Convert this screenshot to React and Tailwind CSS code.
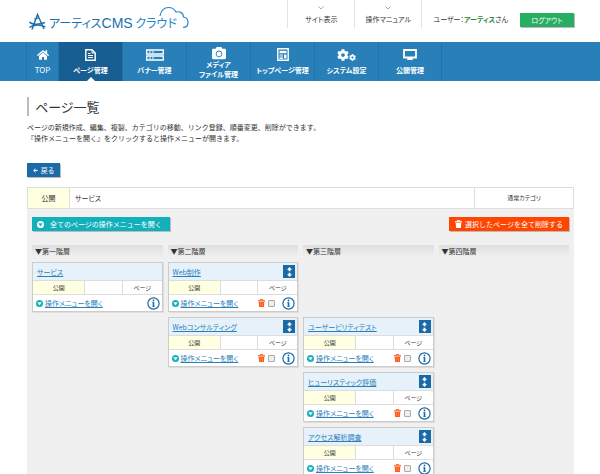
import React from 'react';
import { FaHome, FaCamera, FaCog, FaArrowLeft } from 'react-icons/fa';

const PageIcon = () => (
  <svg width="11" height="12" viewBox="0 0 11 12" fill="none" stroke="currentColor">
    <path d="M.8.8h6.200l3.200 3.200v7.200H.8z" strokeWidth="1.4" />
    <path d="M7 1v3h3M3 4.500h2.500M3 6.500h5M3 8.500h5" strokeWidth="1" />
  </svg>
);

const BannerIcon = () => (
  <svg width="18" height="12" viewBox="0 0 18 12" fill="none" stroke="currentColor">
    <path d="M.7 1h16.600v4H.7zM.7 7h16.600v4H.7z" strokeWidth="1.3" />
    <path d="M3 3h6M3 9h6" strokeWidth="1" strokeDasharray="2 1" />
  </svg>
);

const TopPageIcon = () => (
  <svg width="12" height="13" viewBox="0 0 12 13" fill="none" stroke="currentColor">
    <path d="M.8.8h10.400v11.400H.8z" strokeWidth="1.4" />
    <path d="M2.500 4h7" strokeWidth="2.400" />
    <path d="M2.500 7h3.500M2.500 9h3.500M2.500 10.500h3.500" strokeWidth="1" />
    <path d="M7 6.500h2.500v4H7z" fill="currentColor" stroke="none" />
  </svg>
);

const MonitorIcon = () => (
  <svg width="14" height="11" viewBox="0 0 14 11">
    <path d="M1 1h12v7.500H1z" fill="none" stroke="currentColor" strokeWidth="1.8" />
    <path d="M5 8.500h4l1 2.500H4z" fill="currentColor" />
  </svg>
);

const GearsIcon = () => (
  <span className="flex items-end">
    <FaCog size={12} />
    <FaCog size={7} />
  </span>
);

const InfoIcon = () => (
  <svg width="13" height="13" viewBox="0 0 13 13" fill="none" stroke="currentColor">
    <circle cx="6.500" cy="6.500" r="5.600" strokeWidth="1.200" />
    <path d="M6.500 5.200v4.600" strokeWidth="1.600" />
    <path d="M5.300 5.600h1.200M5.400 9.400h2.200" strokeWidth=".8" />
    <circle cx="6.500" cy="3.500" r=".9" fill="currentColor" stroke="none" />
  </svg>
);

const MoveIcon = () => (
  <svg width="5" height="10" viewBox="0 0 5 10" fill="currentColor">
    <path d="M2.500 0L5 2.700H3.400v1.600H1.600V2.700H0zM2.500 10L0 7.300h1.600V5.700h1.800v1.600H5z" />
  </svg>
);

const TrashIcon = () => (
  <svg width="7" height="8" viewBox="0 0 7 8">
    <path d="M2.200 1.200V.5h2.600v.7" fill="none" stroke="currentColor" strokeWidth=".9" />
    <path d="M0 1.200h7v1.300H0zM.7 3h5.600L5.900 8H1.100z" fill="currentColor" />
    <path d="M2.600 3.700v3.300M4.400 3.700v3.300" stroke="#ffffff" strokeOpacity=".45" strokeWidth=".5" />
  </svg>
);

const OpenIcon = ({ mark = '#ffffff' }) => (
  <svg className="shrink-0" width="7" height="7" viewBox="0 0 7 7">
    <circle cx="3.500" cy="3.500" r="3.500" fill="currentColor" />
    <path d="M1.600 2.400h3.800L3.500 5.200z" fill={mark} stroke={mark} strokeWidth=".3" />
  </svg>
);

const ChevronDown = () => (
  <svg width="6" height="4" viewBox="0 0 6 4" fill="none" stroke="#aaaaaa">
    <path d="M.5.5L3 3 5.500.5" />
  </svg>
);

const Logo = () => (
  <a href="#top" className="relative flex items-end pt-[13px] text-[#1b70b0]">
    <svg width="19" height="18" viewBox="0 0 19 18" fill="none" stroke="currentColor" strokeWidth="1.400">
      <path d="M4 16.500L9.500 1.500 16 16" />
      <path d="M6.500 5.500C8 7 9 4 10.500 5.500" />
      <path d="M1.500 9c2 2.500 9 3 15.500.5M1.500 14.500C5 11.500 12 11 17.500 14" />
    </svg>
    <span className="ml-[2px] whitespace-nowrap text-[12px] leading-[16px]">
      アーティス<span className="font-['Liberation_Sans',sans-serif] text-[14px]">CMS</span>{' '}
      <span className="text-[#2386c8]">クラウド</span>
    </span>
    <svg
      className="absolute top-[6px] left-[131px]"
      width="31"
      height="23"
      viewBox="0 0 31 23"
      fill="none"
      stroke="#2386c8"
      strokeWidth="1.200"
    >
      <path d="M1 10C2 5 5 1.500 9.500 1.500c3.500 0 6 1.500 7.500 4.500 4-1 7.500 1 7.500 5 3 .5 4.500 3 4.500 5.500 0 3-2 5-5 5" />
    </svg>
  </a>
);

const navItems = [
  { label: ['ページ管理'], icon: PageIcon, active: true },
  { label: ['バナー管理'], icon: BannerIcon },
  { label: ['メディア', 'ファイル管理'], icon: FaCamera },
  { label: ['トップページ管理'], icon: TopPageIcon },
  { label: ['システム設定'], icon: GearsIcon },
  { label: ['公開管理'], icon: MonitorIcon },
];

const levels = ['第一階層', '第二階層', '第三階層', '第四階層'];

// one array per row of the tree, null = empty slot
const rows = [
  [{ title: 'サービス', root: true }, { title: 'Web制作' }, null, null],
  [null, { title: 'Webコンサルティング' }, { title: 'ユーザービリティテスト' }, null],
  [null, null, { title: 'ヒューリスティック評価' }, null],
  [null, null, { title: 'アクセス解析調査' }, null],
];

const Header = () => (
  <header className="flex h-[42px] items-start pr-[26px] pl-[28px]">
    <Logo />
    <div className="ml-auto flex text-[7px] leading-[10px]">
      {['サイト表示', '操作マニュアル'].map((label) => (
        <a
          key={label}
          href="#link"
          className="flex h-[28px] w-[67px] flex-col items-center gap-[4px] border-l border-[#e4e4e4] pt-[6px]"
        >
          <ChevronDown />
          {label}
        </a>
      ))}
      <div className="h-[28px] border-l border-[#e4e4e4] pt-[14px] pl-[11px] whitespace-nowrap">
        ユーザー：<b className="text-[#2a8a35]">アーティス</b>さん
      </div>
      <button className="mt-[13px] ml-[12px] h-[14px] w-[54px] bg-[#27ae60] text-white shadow-[1px_1px_0_#bbbbbb]">
        ログアウト
      </button>
    </div>
  </header>
);

const Nav = () => (
  <nav className="flex h-[39px] bg-[#2980b9] pl-[26px] text-[7px] leading-[9px] font-bold text-white">
    <a
      href="#top"
      className="flex w-[32px] flex-col items-center border-l border-[#2273a9] pt-[6px] font-normal"
    >
      <span className="flex h-[13px] items-center">
        <FaHome size={12} />
      </span>
      <span className="mt-[4px] text-[8px]">TOP</span>
    </a>
    {navItems.map(({ label, icon: Icon, active }) => (
      <a
        key={label[0]}
        href="#nav"
        className={`relative flex w-[64px] flex-col items-center border-l border-[#2273a9] whitespace-nowrap last:border-r ${
          active ? 'bg-[#175f93]' : ''
        } ${label.length > 1 ? 'pt-[4px]' : 'pt-[6px]'}`}
      >
        <span className="flex h-[13px] items-center">
          <Icon size={14} />
        </span>
        <span className={`text-center ${label.length > 1 ? '' : 'mt-[4px]'}`}>
          {label.map((line) => (
            <span key={line} className="block leading-[10px]">
              {line}
            </span>
          ))}
        </span>
        {active && (
          <svg className="absolute bottom-0" width="8" height="4" viewBox="0 0 8 4" fill="#ffffff">
            <path d="M0 4l4-4 4 4z" />
          </svg>
        )}
      </a>
    ))}
  </nav>
);

const PageCard = ({ title, root }) => (
  <div className="border border-[#cccccc] bg-white shadow-[1px_1px_0_#dddddd]">
    <div className="flex h-[17px] items-center justify-between bg-[#e6f1fa] pr-[2px] pl-[4px]">
      <a href="#page" className="whitespace-nowrap text-[#2980b9] underline">
        {title}
      </a>
      {!root && (
        <button
          aria-label={`${title}を移動`}
          className="flex h-[13px] w-[12px] items-center justify-center bg-[#1a6aa8] text-white"
        >
          <MoveIcon />
        </button>
      )}
    </div>
    <div className="grid h-[15px] grid-cols-[4fr_3fr_3fr] border-y border-[#dddddd] text-center text-[6px] leading-[13px]">
      <span className="bg-[#ffffe1]">公開</span>
      <span className="border-x border-[#dddddd]" />
      <span>ページ</span>
    </div>
    <div className="flex h-[16px] items-center pr-[2px] pl-[3px] text-[#2980b9]">
      <span className="text-[#12b0ba]">
        <OpenIcon />
      </span>
      <a href="#menu" className="ml-[2px] whitespace-nowrap underline">
        操作メニューを開く
      </a>
      <div className="ml-auto flex items-center">
        {!root && (
          <>
            <button aria-label={`${title}を削除`} className="text-[#ff5a1c]">
              <TrashIcon />
            </button>
            <input
              type="checkbox"
              aria-label={`${title}を選択`}
              className="mr-[7px] ml-[3px] size-[7px] appearance-none rounded-[1px] border border-[#aaaaaa] bg-[#eeeeee]"
            />
          </>
        )}
        <button aria-label="情報" className="text-[#1a6aa8]">
          <InfoIcon />
        </button>
      </div>
    </div>
  </div>
);

export default function App() {
  return (
    <div className="min-h-screen bg-white font-['Noto_Sans_CJK_JP',sans-serif] text-[#333333] [font-feature-settings:'palt']">
      <Header />
      <Nav />
      <main className="pt-[16px] pr-[26px] pl-[27px] text-[7px] leading-[10px]">
        <h1 className="border-l-2 border-[#bbbbbb] pl-[6px] text-[13px] leading-[19px]">ページ一覧</h1>
        <p className="mt-[6px] leading-[11px] [font-feature-settings:normal]">
          ページの新規作成、編集、複製、カテゴリの移動、リンク登録、順番変更、削除ができます。
          <br />
          『操作メニューを開く』をクリックすると操作メニューが開きます。
        </p>
        <button className="mt-[19px] flex h-[14px] w-[33px] items-center justify-center gap-[3px] bg-[#1a6aa8] text-white shadow-[1px_1px_0_#bbbbbb]">
          <FaArrowLeft size={5} />
          戻る
        </button>

        <div className="mt-[10px] flex h-[22px] border border-[#dddddd] leading-[20px]">
          <span className="w-[42px] border-r border-[#dddddd] bg-[#ffffe1] text-center">公開</span>
          <span className="flex-1 pl-[5px]">サービス</span>
          <span className="w-[99px] border-l border-[#dddddd] text-center text-[6px]">通常カテゴリ</span>
        </div>

        <div className="bg-[#f0f0f0] px-[5px] pt-[8px] pb-[10px]">
          <div className="flex justify-between text-white [font-feature-settings:normal]">
            <button className="flex h-[14px] w-[138px] items-center gap-[6px] bg-[#12b0ba] pl-[5px] whitespace-nowrap shadow-[1px_1px_0_#bbbbbb]">
              <OpenIcon mark="#12b0ba" />
              全てのページの操作メニューを開く
            </button>
            <button className="flex h-[14px] w-[120px] items-center justify-center gap-[3px] bg-[#ff4500] whitespace-nowrap shadow-[1px_1px_0_#bbbbbb]">
              <TrashIcon />
              選択したページを全て削除する
            </button>
          </div>

          <div className="mt-[14px] grid grid-cols-4 gap-[5px]">
            {levels.map((level) => (
              <h2 key={level} className="h-[12px] bg-linear-to-b from-[#dedede] to-[#f0f0f0] pl-[3px] leading-[12px]">
                ▼{level}
              </h2>
            ))}
            {rows.map((row, i) =>
              row.map((page, j) => (page ? <PageCard key={`${i}-${j}`} {...page} /> : <div key={`${i}-${j}`} />))
            )}
          </div>
        </div>
      </main>
    </div>
  );
}
